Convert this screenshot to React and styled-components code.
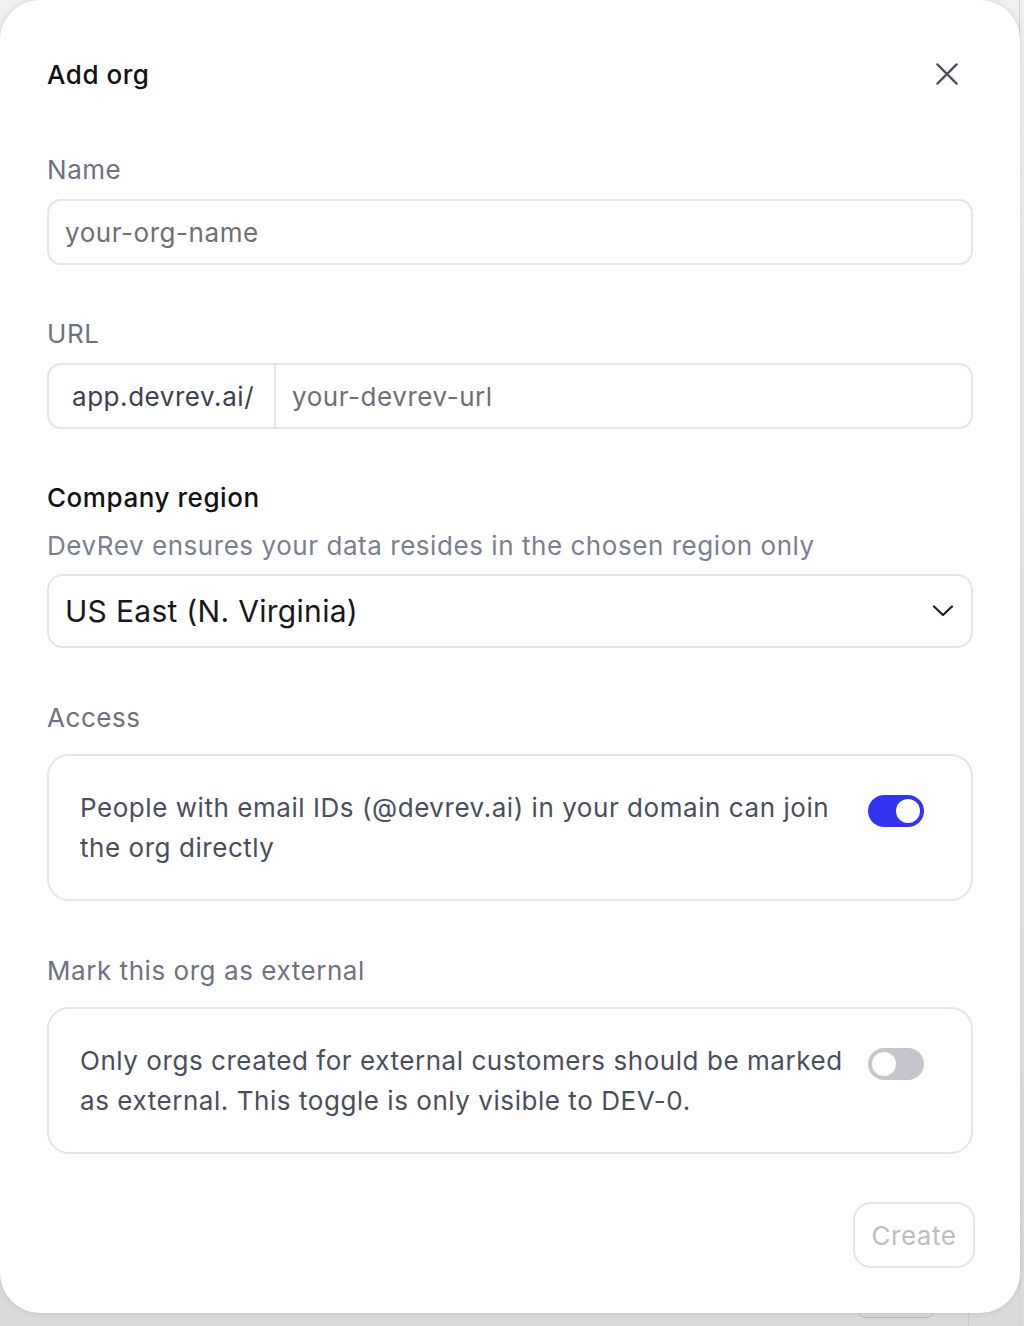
import React from 'react';
import styled, { createGlobalStyle } from 'styled-components';

const GlobalStyle = createGlobalStyle`
  html, body {
    margin: 0;
    padding: 0;
  }
  body {
    font-family: Inter, "Noto Sans", "Liberation Sans", sans-serif;
    background: #e6e6e6;
  }
  * {
    box-sizing: border-box;
  }
`;

const Backdrop = styled.div`
  position: relative;
  width: 1024px;
  height: 1326px;
  overflow: hidden;
  background: linear-gradient(180deg, #f0f0f0 0%, #e4e4e4 70%, #d8d9d9 100%);
`;

const BackDivider = styled.div`
  position: absolute;
  left: 968px;
  top: 0;
  bottom: 0;
  width: 1px;
  background: #c9c9cc;
`;

const BackEdge = styled.div`
  position: absolute;
  left: 1019px;
  top: 0;
  bottom: 0;
  width: 1px;
  background: #d0d0d2;
`;

const GhostButton = styled.div`
  position: absolute;
  left: 856px;
  top: 1290px;
  width: 80px;
  height: 28px;
  border: 1px solid #b9b9c0;
  border-radius: 10px;
`;

const Modal = styled.div`
  position: absolute;
  left: 0;
  top: 0;
  width: 1020px;
  height: 1313px;
  background: #ffffff;
  border-radius: 40px;
  box-shadow: 0 0 6px rgba(0, 0, 0, 0.12);
  padding: 0 47px;
  display: flex;
  flex-direction: column;
  letter-spacing: 0.55px;
`;

const Header = styled.div`
  display: flex;
  align-items: center;
  justify-content: space-between;
  height: 148px;
`;

const Title = styled.h2`
  margin: 0;
  font-size: 26px;
  font-weight: 500;
  color: #111114;
`;

const CloseButton = styled.button`
  border: none;
  background: none;
  padding: 0;
  margin-right: 12px;
  width: 28px;
  height: 28px;
  display: flex;
  align-items: center;
  justify-content: center;
  cursor: pointer;
  color: #4b4f5c;
`;

const Field = styled.div`
  display: flex;
  flex-direction: column;
  margin-bottom: ${(p) => p.$gap || 0}px;
`;

const Label = styled.div`
  font-size: 26px;
  line-height: 44px;
  color: ${(p) => (p.$strong ? '#111114' : '#6d7282')};
  font-weight: ${(p) => (p.$strong ? 500 : 400)};
  margin-bottom: ${(p) => p.$mb || 0}px;
`;

const Hint = styled.div`
  font-size: 26px;
  line-height: 44px;
  margin-top: 4px;
  color: #7a7f8f;
  margin-bottom: 6px;
`;

const InputBox = styled.div`
  display: flex;
  align-items: stretch;
  height: ${(p) => p.$h || 66}px;
  width: 926px;
  border: 2px solid #e4e4ea;
  border-radius: 14px;
  overflow: hidden;
`;

const Placeholder = styled.div`
  flex: 1;
  display: flex;
  align-items: center;
  padding-left: ${(p) => p.$pl || 16}px;
  font-size: 26px;
  color: #6e6e76;
`;

const Prefix = styled.div`
  display: flex;
  align-items: center;
  padding: 0 20px 0 23px;
  border-right: 2px solid #e4e4ea;
  font-size: 26px;
  color: #3c4050;
`;

const SelectBox = styled(InputBox)`
  justify-content: space-between;
  align-items: center;
  padding: 0 17px 0 16px;
  border-radius: 16px;
`;

const SelectValue = styled.span`
  font-size: 30px;
  letter-spacing: 0.3px;
  color: #18181c;
`;

const Card = styled.div`
  width: 926px;
  min-height: 147px;
  border: 2px solid #e4e4ea;
  border-radius: 22px;
  display: flex;
  align-items: flex-start;
  justify-content: space-between;
  padding: 32px 47px 0 31px;
`;

const CardText = styled.p`
  margin: 0;
  max-width: 772px;
  font-size: 26px;
  line-height: 40px;
  color: #4a4e5c;
`;

const Toggle = styled.div`
  flex: none;
  width: 56px;
  height: 32px;
  margin-top: 7px;
  border-radius: 16px;
  background: ${(p) => (p.$on ? '#3434f0' : '#c5c5cd')};
  display: flex;
  align-items: center;
  justify-content: ${(p) => (p.$on ? 'flex-end' : 'flex-start')};
  padding: 0 4px;
`;

const Knob = styled.span`
  width: 24px;
  height: 24px;
  border-radius: 50%;
  background: #ffffff;
`;

const Footer = styled.div`
  display: flex;
  justify-content: flex-end;
  margin-top: 48px;
  margin-right: -2px;
`;

const CreateButton = styled.button`
  width: 122px;
  height: 66px;
  border: 2px solid #e6e6e8;
  border-radius: 18px;
  background: #ffffff;
  font-family: inherit;
  font-size: 26px;
  letter-spacing: 0.5px;
  color: #bdbdc0;
  cursor: not-allowed;
`;

const ChevronDown = () => (
  <svg width="22" height="14" viewBox="0 0 22 14" fill="none">
    <path d="M2 2.5l9 8.5 9-8.5" stroke="#1d1d22" strokeWidth="2.2" strokeLinecap="round" strokeLinejoin="round" />
  </svg>
);

const CloseIcon = () => (
  <svg width="22" height="22" viewBox="0 0 24 24" fill="none">
    <path d="M1.5 1.5l21 21M22.5 1.5l-21 21" stroke="currentColor" strokeWidth="2.5" strokeLinecap="round" />
  </svg>
);

const App = () => {
  return (
    <>
      <GlobalStyle />
      <Backdrop>
        <BackDivider />
        <BackEdge />
        <GhostButton />
        <Modal>
          <Header>
            <Title>Add org</Title>
            <CloseButton aria-label="Close">
              <CloseIcon />
            </CloseButton>
          </Header>

          <Field $gap={47}>
            <Label $mb={7}>Name</Label>
            <InputBox>
              <Placeholder>your-org-name</Placeholder>
            </InputBox>
          </Field>

          <Field $gap={47}>
            <Label $mb={7}>URL</Label>
            <InputBox>
              <Prefix>app.devrev.ai/</Prefix>
              <Placeholder $pl={16}>your-devrev-url</Placeholder>
            </InputBox>
          </Field>

          <Field $gap={48}>
            <Label $strong>Company region</Label>
            <Hint>DevRev ensures your data resides in the chosen region only</Hint>
            <SelectBox $h={74}>
              <SelectValue>US East (N. Virginia)</SelectValue>
              <ChevronDown />
            </SelectBox>
          </Field>

          <Field $gap={48}>
            <Label $mb={14}>Access</Label>
            <Card>
              <CardText>People with email IDs (@devrev.ai) in your domain can join the org directly</CardText>
              <Toggle $on>
                <Knob />
              </Toggle>
            </Card>
          </Field>

          <Field>
            <Label $mb={14}>Mark this org as external</Label>
            <Card>
              <CardText>Only orgs created for external customers should be marked as external. This toggle is only visible to DEV-0.</CardText>
              <Toggle>
                <Knob />
              </Toggle>
            </Card>
          </Field>

          <Footer>
            <CreateButton disabled>Create</CreateButton>
          </Footer>
        </Modal>
      </Backdrop>
    </>
  );
};

export default App;
